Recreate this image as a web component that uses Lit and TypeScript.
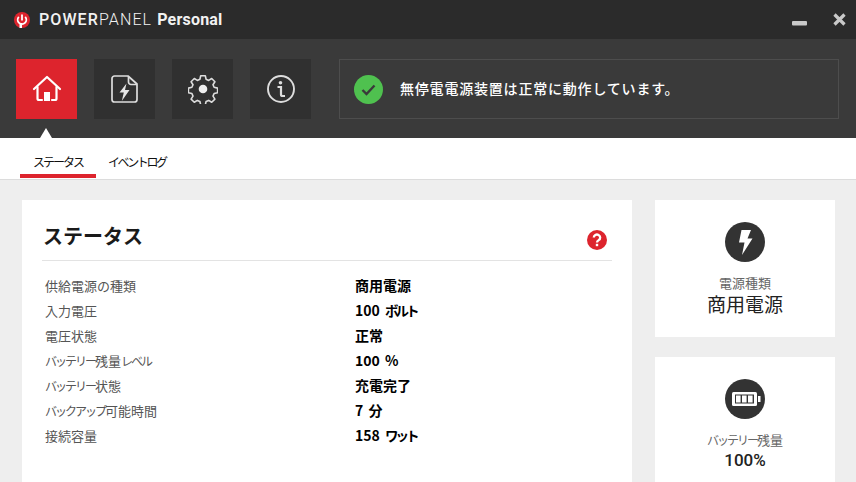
import { LitElement, html, css, svg } from "lit";
import { customElement } from "lit/decorators.js";

const rows: [string, string][] = [
  ["供給電源の種類", "商用電源"],
  ["入力電圧", "100 ボルト"],
  ["電圧状態", "正常"],
  ["バッテリー残量レベル", "100 %"],
  ["バッテリー状態", "充電完了"],
  ["バックアップ可能時間", "7 分"],
  ["接続容量", "158 ワット"],
];

/** Katakana is set narrow in the reference: wrap each run so it can be tightened. */
const narrowKana = (text: string) =>
  text.split(/([\u30A0-\u30FF]+)/).map((part, i) =>
    i % 2 ? html`<span class="kana">${part}</span>` : part
  );

const homeIcon = svg`<svg width="30" height="30" viewBox="0 0 30 30" fill="none" stroke="#fff" stroke-width="2.2" stroke-linejoin="round" stroke-linecap="round"><path d="M2 15 15 3l13 12"/><path d="M5.500 13v11.500a1.500 1.500 0 0 0 1.500 1.500h3M24.500 13v11.500a1.500 1.500 0 0 1-1.500 1.500h-3"/><rect x="12" y="18" width="6" height="9" fill="#fff" stroke="none"/></svg>`;
const fileIcon = svg`<svg width="30" height="30" viewBox="0 0 30 30" fill="none" stroke="#ddd" stroke-width="1.700" stroke-linejoin="round"><path d="M4.500 2h13.500l9 8v15.500a2.500 2.500 0 0 1-2.500 2.500h-20a2.500 2.500 0 0 1-2.500-2.500v-21a2.500 2.500 0 0 1 2.500-2.500z"/><path d="M18.500 2.500v5.500a2.500 2.500 0 0 0 2.500 2.500h6"/><path d="M16.500 9.500 9.500 18.500h4.300l-2 8.500 7.700-11h-4.500z" fill="#e6e6e6" stroke="none"/></svg>`;
const gearIcon = svg`<svg width="30" height="30" viewBox="0 0 30 30" fill="none" stroke="#ddd" stroke-width="1.600" stroke-linejoin="round"><path d="M12.700 1.800h4.600l.8 3.500 2.600 1.100 3-1.900 3.200 3.200-1.900 3 1.100 2.600 3.500.8v4.600l-3.500.8-1.100 2.600 1.900 3-3.200 3.200-3-1.900-2.600 1.100-.8 3.500h-4.600l-.8-3.500-2.600-1.100-3 1.900-3.200-3.200 1.900-3-1.100-2.600-3.500-.8v-4.600l3.500-.8 1.100-2.600-1.900-3 3.200-3.200 3 1.900 2.600-1.100z"/><circle cx="15" cy="15" r="4.300" fill="#eee" stroke="none"/></svg>`;
const infoIcon = svg`<svg width="30" height="30" viewBox="0 0 30 30" fill="none" stroke="#ddd" stroke-width="1.900"><circle cx="15" cy="15" r="13"/><circle cx="14.500" cy="8.700" r="1.800" fill="#ddd" stroke="none"/><path d="M11.500 13h3.500v7.500q0 1.500 1.500 1.500h2.500" stroke-width="2.200"/></svg>`;

@customElement("app-root")
export class AppRoot extends LitElement {
  static styles = css`
    :host {
      display: block;
      width: 856px;
      height: 482px;
      overflow: hidden;
      background: #eeeeee;
      font-family: "Noto Sans CJK JP", "Liberation Sans", sans-serif;
      font-size: 13px;
    }
    .kana { font-size: 12px; letter-spacing: -2px; }
    .titlebar {
      height: 39px;
      background: #2b2b2b;
      display: flex;
      align-items: center;
      padding: 0 10px 0 14px;
      color: #fff;
    }
    .logo { width: 16px; height: 16px; margin-right: 9px; display: block; }
    .brand {
      font-family: Roboto, "Liberation Sans", sans-serif;
      font-size: 16px;
      letter-spacing: 1.100px;
      white-space: nowrap;
      color: #f2f2f2;
      flex: 1;
    }
    .brand b { font-weight: 500; }
    .brand i { font-style: normal; font-weight: 300; }
    .brand em { font-style: normal; font-weight: 700; letter-spacing: 0.200px; }
    .winbtns { display: flex; align-items: center; gap: 26px; }
    .winbtns svg { display: block; }
    .toolbar {
      position: relative;
      height: 99px;
      box-sizing: border-box;
      background: #3a3a3a;
      padding: 20px 17px 0 16px;
      display: flex;
      gap: 17px;
    }
    .tool {
      width: 61px;
      height: 60px;
      background: #303030;
      display: flex;
      align-items: center;
      justify-content: center;
      position: relative;
    }
    .tool.on { background: #dd242d; }
    .tool.on::after {
      content: "";
      position: absolute;
      left: 24px;
      top: 69px;
      border-left: 6.500px solid transparent;
      border-right: 6.500px solid transparent;
      border-bottom: 10px solid #fff;
    }
    .status {
      flex: 1;
      height: 60px;
      box-sizing: border-box;
      margin-left: 11px;
      border: 1px solid #4d4d4d;
      display: flex;
      align-items: center;
      padding-left: 14px;
      color: #fff;
      font-size: 14px;
      font-weight: 500;
      letter-spacing: 0.800px;
      gap: 17px;
    }
    .status span { position: relative; top: -1px; }
    .status svg { display: block; }
    .tabs {
      height: 41px;
      background: #fff;
      border-bottom: 1px solid #dcdcdc;
      display: flex;
      padding-left: 20px;
      color: #111;
      font-size: 12px;
    }
    .tab {
      height: 40px;
      box-sizing: border-box;
      display: flex;
      align-items: center;
      justify-content: center;
      border-bottom: 4px solid transparent;
      padding-top: 10px;
    }
    .tab.on { width: 76px; border-bottom-color: #dd242d; letter-spacing: -2px; }
    .tab.second { margin-left: 12px; letter-spacing: -2.400px; }
    .main {
      display: flex;
      padding: 20px 21px 0 22px;
      gap: 23px;
      align-items: flex-start;
    }
    .card {
      width: 610px;
      height: 300px;
      background: #fff;
      box-sizing: border-box;
      padding: 20px 20px 0 20px;
    }
    .head {
      height: 41px;
      box-sizing: border-box;
      border-bottom: 1px solid #e3e3e3;
      display: flex;
      align-items: flex-start;
      justify-content: space-between;
      padding: 0 5px 0 1px;
    }
    h1 {
      margin: 0;
      font-size: 20px;
      line-height: 32px;
      font-weight: 700;
      color: #1a1a1a;
    }
    .help { display: block; margin-top: 10px; }
    .rows {
      padding: 12px 0 0 3px;
      display: grid;
      grid-template-columns: 310px 1fr;
      grid-auto-rows: 25px;
      align-items: center;
      line-height: 25px;
    }
    .k { color: #555; }
    .v { color: #000; font-weight: 700; font-size: 14px; word-spacing: 2px; }
    .v .kana { font-size: 13.500px; letter-spacing: -3px; }
    .side { width: 180px; display: flex; flex-direction: column; gap: 20px; }
    .tile {
      background: #fff;
      height: 137px;
      box-sizing: border-box;
      padding-top: 22px;
      display: flex;
      flex-direction: column;
      align-items: center;
    }
    .tile svg { display: block; }
    .tile .lab { color: #666; margin-top: 12px; line-height: 17px; }
    .tile .lab .kana { letter-spacing: -2px; }
    .tile .val { color: #222; font-size: 19px; line-height: 26px; }
    .tile .val.num { font-family: Roboto, "Liberation Sans", sans-serif; font-size: 17px; font-weight: 500; line-height: 24px; }
  `;

  render() {
    return html`
      <div class="titlebar">
        <svg class="logo" viewBox="0 0 16 16">
          <circle cx="8" cy="8" r="8" fill="#dd242d" />
          <path d="M4.800 4.900a4.300 4.300 0 1 0 6.400 0" fill="none" stroke="#fff" stroke-width="1.800" />
          <rect x="7.100" y="2.500" width="1.800" height="6" fill="#fff" />
          <rect x="5.500" y="11" width="2.500" height="5" fill="#fff" />
        </svg>
        <span class="brand"><b>POWER</b><i>PANEL</i> <em>Personal</em></span>
        <div class="winbtns">
          <svg width="15" height="15" viewBox="0 0 15 15"><rect x="0" y="9" width="15" height="4.500" rx="1" fill="#c9c9c9" /></svg>
          <svg width="13" height="13" viewBox="0 0 13 13"><path d="M1.500 1.500l10 10M11.500 1.500l-10 10" stroke="#c9c9c9" stroke-width="3.200" fill="none" /></svg>
        </div>
      </div>
      <div class="toolbar">
        <div class="tool on">${homeIcon}</div>
        <div class="tool">${fileIcon}</div>
        <div class="tool">${gearIcon}</div>
        <div class="tool">${infoIcon}</div>
        <div class="status">
          <svg width="29" height="29" viewBox="0 0 29 29">
            <circle cx="14.500" cy="14.500" r="14.500" fill="#4fc14f" />
            <path d="M8.500 15l4 4 8-8.500" fill="none" stroke="#3a3a3a" stroke-width="2.400" />
          </svg>
          <span>無停電電源装置は正常に動作しています。</span>
        </div>
      </div>
      <div class="tabs">
        <div class="tab on">ステータス</div>
        <div class="tab second">イベントログ</div>
      </div>
      <div class="main">
        <div class="card">
          <div class="head">
            <h1>ステータス</h1>
            <svg class="help" width="20" height="20" viewBox="0 0 20 20">
              <circle cx="10" cy="10" r="10" fill="#dd242d" />
              <path d="M6.800 7.600a3.200 3 0 1 1 4.900 2.500c-1.200.8-1.700 1.300-1.700 2.500" fill="none" stroke="#fff" stroke-width="2.300" />
              <rect x="8.800" y="13.800" width="2.400" height="2.400" fill="#fff" />
            </svg>
          </div>
          <div class="rows">
            ${rows.map(([k, v]) => html`<div class="k">${narrowKana(k)}</div><div class="v">${narrowKana(v)}</div>`)}
          </div>
        </div>
        <div class="side">
          <div class="tile">
            <svg width="40" height="40" viewBox="0 0 40 40">
              <circle cx="20" cy="20" r="20" fill="#333" />
              <path d="M16.500 8h9.500l-3.500 8.500h5l-10.500 16.500 2.500-12.500h-5.500z" fill="#fff" />
            </svg>
            <div class="lab">電源種類</div>
            <div class="val">商用電源</div>
          </div>
          <div class="tile">
            <svg width="40" height="40" viewBox="0 0 40 40">
              <circle cx="20" cy="20" r="20" fill="#333" />
              <rect x="7" y="13" width="25" height="14" rx="1.500" fill="#fff" />
              <rect x="33" y="17" width="2.500" height="6" fill="#fff" />
              <rect x="10" y="15.500" width="19" height="9" fill="#333" />
              <rect x="11" y="16.500" width="4.600" height="7" fill="#fff" />
              <rect x="17" y="16.500" width="4.600" height="7" fill="#fff" />
              <rect x="23" y="16.500" width="4.600" height="7" fill="#fff" />
            </svg>
            <div class="lab">${narrowKana("バッテリー残量")}</div>
            <div class="val num">100%</div>
          </div>
        </div>
      </div>
    `;
  }
}
